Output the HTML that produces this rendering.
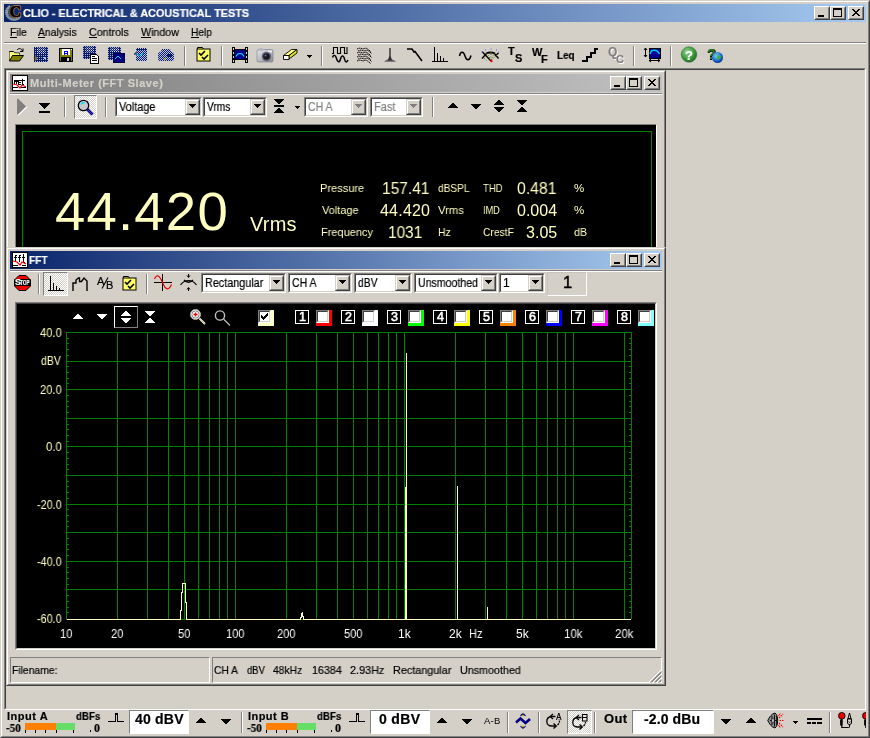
<!DOCTYPE html>
<html><head><meta charset="utf-8"><title>CLIO</title>
<style>
html,body{margin:0;padding:0;}
body{width:870px;height:738px;overflow:hidden;background:#d4d0c8;position:relative;
 font-family:"Liberation Sans",sans-serif;font-size:11px;color:#000;}
.a{position:absolute;}
.t{position:absolute;white-space:nowrap;line-height:1;will-change:transform;-webkit-text-stroke:0.2px;}
.face{background:#d4d0c8;}
.tb-act{background:linear-gradient(to right,#0a246a,#a6caf0);}
.tb-in{background:linear-gradient(to right,#808080,#c0c0c0);}
.btn{position:absolute;background:#d4d0c8;box-sizing:border-box;
 border:1px solid;border-color:#fff #404040 #404040 #fff;}
.btn:after{content:"";position:absolute;left:0;top:0;right:0;bottom:0;
 border:1px solid;border-color:#d4d0c8 #808080 #808080 #d4d0c8;}
.sunk{position:absolute;box-sizing:border-box;border:1px solid;border-color:#808080 #fff #fff #808080;}
.pressed{position:absolute;box-sizing:border-box;border:1px solid;border-color:#808080 #fff #fff #808080;
 background-color:#eae8e4;background-image:conic-gradient(#fff 25%,#d4d0c8 0 50%,#fff 0 75%,#d4d0c8 0);background-size:2px 2px;}
.sepv{position:absolute;width:1px;background:#808080;box-shadow:1px 0 0 #fff;}
.seph{position:absolute;height:1px;background:#808080;box-shadow:0 1px 0 #fff;}
.combo{position:absolute;box-sizing:border-box;background:#fff;border:1px solid;border-color:#808080 #fff #fff #808080;}
.combo:before{content:"";position:absolute;left:0;top:0;right:0;bottom:0;border:1px solid;border-color:#404040 #d4d0c8 #d4d0c8 #404040;}
.combo .cb{position:absolute;right:1px;top:1px;bottom:1px;width:15px;background:#d4d0c8;box-sizing:border-box;
 border:1px solid;border-color:#d4d0c8 #404040 #404040 #d4d0c8;color:#000;}
.combo .cb:before{content:"";position:absolute;left:0;top:0;right:0;bottom:0;border:1px solid;border-color:#fff #808080 #808080 #fff;}
.combo .cb:after{content:"";position:absolute;left:3px;top:4px;width:1px;height:1px;background:currentColor;box-shadow:1px 0px 0 0 currentColor,2px 0px 0 0 currentColor,3px 0px 0 0 currentColor,4px 0px 0 0 currentColor,5px 0px 0 0 currentColor,6px 0px 0 0 currentColor,1px 1px 0 0 currentColor,2px 1px 0 0 currentColor,3px 1px 0 0 currentColor,4px 1px 0 0 currentColor,5px 1px 0 0 currentColor,2px 2px 0 0 currentColor,3px 2px 0 0 currentColor,4px 2px 0 0 currentColor,3px 3px 0 0 currentColor;}
.combo.dis .cb{color:#808080;}
.dis{color:#808080;text-shadow:1px 1px 0 #fff;}
.disw{color:#808080;}
svg{position:absolute;overflow:visible;}
</style></head>
<body>
<!-- main frame -->
<div class="a" style="left:0;top:0;width:870px;height:738px;box-sizing:border-box;border:1px solid;border-color:#d4d0c8 #404040 #404040 #d4d0c8;"></div>
<div class="a" style="left:1px;top:1px;width:868px;height:736px;box-sizing:border-box;border:1px solid;border-color:#fff #808080 #808080 #fff;"></div>
<div class="a tb-act" style="left:4px;top:4px;width:862px;height:18px;"></div>
<svg style="left:5px;top:5px;" width="17" height="16" viewBox="0 0 17 16"><path d="M4.500 0.500C1.500 2 0 5 0.500 8.500c0.500 4 4 7 8.500 7 3.500 0 6-1.500 7-4l-3 0.500c-1 1-2.500 1.500-4 1.500-3.500 0-6-2.500-6-6 0-2.500 0.800-4.500 2.500-6z" fill="#8e96a6" stroke="#b0b4b8" stroke-width="0.600" stroke-dasharray="1.200 0.800"/><path d="M2 4l4 8M1 8l6 5M4 13l9 0M2 11l9 3" stroke="#5a6a90" stroke-width="0.500" fill="none"/><text x="4.600" y="12.300" font-family="Liberation Serif,serif" font-weight="bold" font-size="16" fill="#b8843a" stroke="#b8843a" stroke-width="2">C</text><text x="4.600" y="12.300" font-family="Liberation Serif,serif" font-weight="bold" font-size="16" fill="#000" stroke="#000" stroke-width="0.700">C</text></svg>
<div class="t" style="left:23.00px;top:7.69px;font-size:11px;font-weight:bold;color:#fff;transform:scaleX(0.9844);transform-origin:0 0;">CLIO - ELECTRICAL &amp; ACOUSTICAL TESTS</div>
<div class="btn" style="left:814px;top:6px;width:16px;height:14px;"><div class="a" style="left:3px;top:8px;width:6px;height:2px;background:#000;"></div></div>
<div class="btn" style="left:830px;top:6px;width:16px;height:14px;"><div class="a" style="left:2px;top:1px;width:9px;height:9px;box-sizing:border-box;border:1px solid #000;border-top-width:2px;"></div></div>
<div class="btn" style="left:848px;top:6px;width:16px;height:14px;"><svg style="left:3px;top:2px;" width="8" height="7" viewBox="0 0 8 7" shape-rendering="crispEdges"><path d="M0 0h2v1h1v1h2v-1h1v-1h2v1h-1v1h-1v1h-1v1h1v1h1v1h1v1h-2v-1h-1v-1h-2v1h-1v1h-2v-1h1v-1h1v-1h1v-1h-1v-1h-1v-1h-1z" fill="#000"/></svg></div>
<div class="t" style="left:10.10px;top:26.69px;font-size:11px;transform:scaleX(0.9534);transform-origin:0 0;">File</div><div class="a" style="left:10.0px;top:37px;width:7px;height:1px;background:#000;"></div>
<div class="t" style="left:38.10px;top:26.69px;font-size:11px;transform:scaleX(0.9424);transform-origin:0 0;">Analysis</div><div class="a" style="left:38.0px;top:37px;width:7px;height:1px;background:#000;"></div>
<div class="t" style="left:89.10px;top:26.69px;font-size:11px;transform:scaleX(0.9692);transform-origin:0 0;">Controls</div><div class="a" style="left:89.0px;top:37px;width:8px;height:1px;background:#000;"></div>
<div class="t" style="left:141.00px;top:26.69px;font-size:11px;transform:scaleX(0.9687);transform-origin:0 0;">Window</div><div class="a" style="left:141.0px;top:37px;width:10px;height:1px;background:#000;"></div>
<div class="t" style="left:190.80px;top:26.69px;font-size:11px;transform:scaleX(0.9238);transform-origin:0 0;">Help</div><div class="a" style="left:191.0px;top:37px;width:8px;height:1px;background:#000;"></div>
<div class="seph" style="left:4px;top:42px;width:862px;"></div>
<!-- top toolbar -->
<svg width="0" height="0" style="left:0;top:0;"><defs><pattern id="dith" width="2" height="2" patternUnits="userSpaceOnUse"><rect width="2" height="2" fill="#0a1a6a"/><rect width="1" height="1" fill="#a8b0d0"/></pattern><pattern id="dith3" width="2" height="2" patternUnits="userSpaceOnUse"><rect width="2" height="2" fill="#0a1a6a"/><rect width="1" height="1" fill="#b8c0e0"/><rect x="1" y="1" width="1" height="1" fill="#b8c0e0"/></pattern><pattern id="dith2" width="2" height="2" patternUnits="userSpaceOnUse"><rect width="2" height="2" fill="#0a1a6a"/><rect width="1" height="1" fill="#d8dcf0"/><rect x="1" y="1" width="1" height="1" fill="#8088b0"/></pattern><radialGradient id="gball" cx="0.4" cy="0.35" r="0.7"><stop offset="0" stop-color="#9fd89f"/><stop offset="0.6" stop-color="#3c9a3c"/><stop offset="1" stop-color="#1e6a1e"/></radialGradient><radialGradient id="globe" cx="0.4" cy="0.35" r="0.7"><stop offset="0" stop-color="#7fd0ff"/><stop offset="0.7" stop-color="#1060c0"/><stop offset="1" stop-color="#003080"/></radialGradient><linearGradient id="cam" x1="0" y1="0" x2="1" y2="1"><stop offset="0" stop-color="#e8e8ee"/><stop offset="1" stop-color="#8a8a96"/></linearGradient></defs></svg>
<svg style="left:8px;top:47px;" width="16" height="16" viewBox="0 0 16 16"><path d="M1.500 13V4.500h4l1 1.500h5v2" fill="#ffff80" stroke="#000" stroke-width="1"/><path d="M1.500 5h4l1 1.500h5V8h-7l-3 5z" fill="#ffff80"/><path d="M4.500 8.500h11l-4 5.500H1.500z" fill="#808000" stroke="#000" stroke-width="1"/><path d="M9 3c1.500-2 4.500-2 5.500 1M15 1.500v3h-3" fill="none" stroke="#000" stroke-width="1"/></svg>
<svg style="left:33px;top:47px;" width="16" height="16" viewBox="0 0 16 16" shape-rendering="crispEdges"><rect x="1" y="0" width="14" height="15" fill="url(#dith)"/><rect x="4" y="1" width="8" height="6" fill="url(#dith2)"/><path d="M2 8v6M3 10v3" stroke="#707020"/><path d="M10 10l2 1.500l-2 1.500" stroke="#c0c8e8" fill="none"/></svg>
<svg style="left:58px;top:47px;" width="16" height="16" viewBox="0 0 16 16" shape-rendering="crispEdges"><rect x="1.500" y="1.500" width="13" height="13" fill="#808000" stroke="#000"/><rect x="4" y="2" width="8" height="6" fill="#fff"/><path d="M6.500 8v-4h3v4M6.500 6.500h3" stroke="#0000ff" fill="none" stroke-width="1"/><rect x="3" y="10" width="10" height="5" fill="#000"/><rect x="9" y="11" width="2" height="3" fill="#d0d0d0"/><rect x="13" y="2" width="1" height="1" fill="#fff"/></svg>
<svg style="left:83px;top:46px;" width="17" height="18" viewBox="0 0 17 18" shape-rendering="crispEdges"><rect x="0" y="0" width="13" height="13" fill="url(#dith)"/><rect x="3" y="1" width="8" height="5" fill="url(#dith2)"/><path d="M7 8h6l2 2v7H7z" fill="#fff" stroke="#000"/><path d="M9 12h5M9 14h5M9 10h3" stroke="#000" fill="none"/></svg>
<svg style="left:108px;top:47px;" width="16" height="16" viewBox="0 0 16 16" shape-rendering="crispEdges"><rect x="0" y="0" width="13" height="13" fill="url(#dith)"/><rect x="3" y="1" width="8" height="4" fill="url(#dith2)"/><rect x="5" y="6" width="11" height="9" fill="#000080" stroke="#000040"/><path d="M7 12l3-3l3 3" stroke="#00e0e0" fill="none" stroke-width="1.2"/></svg>
<svg style="left:133px;top:47px;" width="16" height="16" viewBox="0 0 16 16" shape-rendering="crispEdges"><path d="M3 2h11v12H3z" fill="url(#dith3)"/><path d="M0 7l4-3v5z" fill="#4a5a9a"/><path d="M4 1v2M6 1v2M8 1v2M10 1v2M12 1v2" stroke="#0a1a6a"/><path d="M4 7l3 2 4-3" stroke="#00a0c0" fill="none"/></svg>
<svg style="left:158px;top:48px;" width="16" height="16" viewBox="0 0 16 16"><path d="M4 1h8l2 4h-12z" fill="url(#dith3)"/><path d="M0 6c0-1 1-2 2-2h12c1 0 2 1 2 2v5c0 1-1 2-2 2H2c-1 0-2-1-2-2z" fill="url(#dith3)"/><path d="M9 6h5v3H9z" fill="#0a1a6a"/><path d="M6 11h2" stroke="#e0e000"/></svg>
<div class="sepv" style="left:184px;top:46px;height:20px;"></div>
<svg style="left:196px;top:46px;" width="16" height="16" viewBox="0 0 16 16"><path d="M1.500 3.500v-2h5l1 2" fill="#ffff66" stroke="#000"/><rect x="1" y="3" width="13" height="12" fill="#ffff66" stroke="#000"/><path d="M3 7l2 2 4-4" stroke="#000" fill="none" stroke-width="1.600"/><path d="M6 11l2 2 4-4" stroke="#000" fill="none" stroke-width="1.600"/></svg>
<div class="sepv" style="left:221px;top:46px;height:20px;"></div>
<svg style="left:232px;top:47px;" width="16" height="16" viewBox="0 0 16 16" shape-rendering="crispEdges"><rect x="0" y="0" width="16" height="16" fill="#000"/><rect x="3" y="3" width="10" height="9" fill="#000090"/><path d="M4 9.500c1.500-4 6.500-4 8 0" stroke="#00d0ff" fill="none" stroke-width="1.100" shape-rendering="auto"/><path d="M1 1h1v2H1zM1 5h1v2H1zM1 9h1v2H1zM1 13h1v2H1zM14 1h1v2h-1zM14 5h1v2h-1zM14 9h1v2h-1zM14 13h1v2h-1z" fill="#d4d0c8"/><rect x="3" y="13" width="10" height="3" fill="#d4d0c8"/><rect x="3" y="0" width="10" height="2" fill="#d4d0c8"/></svg>
<svg style="left:257px;top:48px;" width="16" height="16" viewBox="0 0 16 16"><rect x="0" y="1.500" width="16" height="12.500" rx="1.500" fill="url(#cam)" stroke="#7a7a88" stroke-width="0.600"/><rect x="1" y="0" width="5" height="3" rx="1" fill="#b8b8c4"/><rect x="11" y="2.500" width="4" height="2" fill="#e8e8f0"/><circle cx="9.500" cy="8.500" r="4.800" fill="#686878"/><circle cx="9.500" cy="8.500" r="3.300" fill="#181824"/><circle cx="8.500" cy="7.500" r="1" fill="#7070a0"/></svg>
<svg style="left:283px;top:49px;" width="15" height="11" viewBox="0 0 15 11"><path d="M0.500 6.500l8-6h5.500l-8 6z" fill="#ffff80" stroke="#000" stroke-width="0.900"/><path d="M6 6.500l8-6v3.500l-8 6z" fill="#e0e030" stroke="#000" stroke-width="0.900"/><path d="M0.500 6.500h5.500v4H0.500z" fill="#fff" stroke="#000" stroke-width="0.900"/></svg>
<svg style="left:307px;top:55px;" width="5" height="3" viewBox="0 0 5 3" shape-rendering="crispEdges"><path d="M0 0h5v1h-1v1h-1v1h-1v-1h-1v-1h-1z" fill="#000"/></svg>
<div class="sepv" style="left:321px;top:46px;height:20px;"></div>
<svg style="left:332px;top:47px;" width="16" height="16" viewBox="0 0 16 16"><path d="M0 6.500h1.500v-6h4v6h3v-6h4v6h2.500v-6.500" fill="none" stroke="#000" stroke-width="1.100"/><path d="M0.500 10.500c1-3 3-3 4 1s3 4.500 4 0.500s3-4 4 0s2.500 3.500 3.500 1" fill="none" stroke="#000" stroke-width="1.500"/></svg>
<svg style="left:357px;top:47px;" width="16" height="16" viewBox="0 0 16 16"><path d="M0 2l3-1 3 1 3-1 3 2 2 2" fill="none" stroke="#000" stroke-width="1" stroke-dasharray="1.500 0.700"/><path d="M1 4l3-1 3 1 3-1 3 2 2 2" fill="none" stroke="#000" stroke-width="1" stroke-dasharray="1.500 0.700"/><path d="M0 6l3-1 3 1 3-1 3 2 2 2" fill="none" stroke="#000" stroke-width="1" stroke-dasharray="1.500 0.700"/><path d="M1 8l3-1 3 1 3-1 3 2 2 2" fill="none" stroke="#000" stroke-width="1" stroke-dasharray="1.500 0.700"/><path d="M0 10l3-1 3 1 3-1 3 2 2 2" fill="none" stroke="#000" stroke-width="1" stroke-dasharray="1.500 0.700"/><path d="M1 12l3-1 3 1 3-1 3 2 2 2" fill="none" stroke="#000" stroke-width="1" stroke-dasharray="1.500 0.700"/><path d="M0 14l3-1 3 1 3-1 3 2 2 2" fill="none" stroke="#000" stroke-width="1" stroke-dasharray="1.500 0.700"/></svg>
<svg style="left:383px;top:48px;" width="14" height="14" viewBox="0 0 14 14"><path d="M0 13.500c5-0.500 6.300-3 6.300-7V0h1.400v6.500c0 4 1.300 6.500 6.300 7z" fill="#303030"/><path d="M2 13h10" stroke="#707070" stroke-width="1"/></svg>
<svg style="left:407px;top:48px;" width="16" height="16" viewBox="0 0 16 16"><path d="M0 1h5l2 3 1-0.500 7 9.500" fill="none" stroke="#000" stroke-width="1.500"/></svg>
<svg style="left:432px;top:47px;" width="16" height="16" viewBox="0 0 16 16" shape-rendering="crispEdges"><path d="M2.500 0v14M0 14.500h16M5.500 6v8M8.500 9v5M11.500 11v3" fill="none" stroke="#000" stroke-width="1"/></svg>
<svg style="left:459px;top:51px;" width="13" height="10" viewBox="0 0 13 10"><path d="M0.500 5c1-5 4-5 5.500 0s4.500 5 6-0.500" fill="none" stroke="#000" stroke-width="1.500"/></svg>
<svg style="left:481px;top:48px;" width="18" height="15" viewBox="0 0 18 15"><path d="M5 5.500Q9.500 3.500 14 5.500" fill="none" stroke="#000" stroke-width="1.800"/><path d="M1 3.500L10 13M1 10.500L5.500 5.500M13 5l4.500 5.500M17.500 5l-3.500 3" fill="none" stroke="#000" stroke-width="1.400"/><path d="M10 12.500L17 6M10 12V3M10 12L5.500 4.500M10 12l3.500-7M3 10l2.500 2.500" stroke="#707020" stroke-width="0.900" stroke-dasharray="1.200 1.200" fill="none"/><circle cx="10.500" cy="13" r="1.200" fill="#f00"/><path d="M4 2h1M9.500 1h1M15 2h1M1 4h1M17 4h1" stroke="#6060ff" stroke-width="1.200"/></svg>
<div class="t" style="left:508.00px;top:45.69px;font-size:11px;font-weight:bold;">T</div><div class="t" style="left:514.50px;top:53.19px;font-size:11px;font-weight:bold;">S</div>
<div class="t" style="left:531.50px;top:46.69px;font-size:11px;font-weight:bold;">W</div><div class="t" style="left:540.50px;top:53.69px;font-size:11px;font-weight:bold;">F</div>
<div class="t" style="left:556.50px;top:49.71px;font-size:10.5px;font-weight:bold;transform:scaleX(0.9374);transform-origin:0 0;">Leq</div>
<svg style="left:582px;top:48px;" width="16" height="16" viewBox="0 0 16 16" shape-rendering="crispEdges"><path d="M0 12.500h5v-4h4v-4h4v-3.500h3" fill="none" stroke="#000" stroke-width="2"/></svg>
<div class="dis"><div class="t" style="left:608.00px;top:45.84px;font-size:12px;font-weight:bold;">Q</div><div class="t" style="left:615.50px;top:53.69px;font-size:11px;font-weight:bold;">C</div></div>
<div class="sepv" style="left:633px;top:46px;height:20px;"></div>
<svg style="left:644px;top:47px;" width="16" height="16" viewBox="0 0 16 16" shape-rendering="crispEdges"><rect x="5" y="1" width="11" height="10" fill="#000090" stroke="#000"/><path d="M6 7c1-5 7-5 9.500 0" stroke="#00d0ff" fill="none" stroke-width="1.400" shape-rendering="auto"/><path d="M1.500 1v9M0 3l1.500-2 1.500 2M0 8l1.500 2 1.500-2M5 13.500h11M7 12l-2 1.500 2 1.500M14 12l2 1.500-2 1.500" stroke="#000" fill="none" shape-rendering="auto"/></svg>
<div class="sepv" style="left:670px;top:46px;height:20px;"></div>
<svg style="left:681px;top:47px;" width="16" height="16" viewBox="0 0 16 16"><circle cx="8" cy="7.500" r="7.800" fill="url(#gball)" stroke="#2a6a2a" stroke-width="0.500"/></svg>
<div class="t" style="left:685.30px;top:49.00px;font-size:13px;font-weight:bold;color:#fff;">?</div>
<div class="t" style="left:706.50px;top:47.15px;font-size:14px;font-weight:bold;color:#2a7a2a;text-shadow:1px 0 0 #000,0 1px 0 #000;">?</div>
<svg style="left:712px;top:52px;" width="11" height="11" viewBox="0 0 11 11"><circle cx="5.500" cy="5.500" r="5.500" fill="url(#globe)"/><path d="M3 3c2-1 3 0 2 2s1 3 3 2l1-3" fill="#40b040" stroke="none"/></svg>
<!-- mdi client -->
<div class="a" style="left:4px;top:68px;width:862px;height:642px;box-sizing:border-box;border:1px solid;border-color:#808080 #fff #fff #808080;"></div>
<div class="a" style="left:5px;top:69px;width:860px;height:640px;box-sizing:border-box;border:1px solid;border-color:#404040 #d4d0c8 #d4d0c8 #404040;"></div>
<!-- multimeter -->
<div class="a face" style="left:6px;top:70px;width:660px;height:185px;overflow:hidden;"><div class="a" style="left:0;top:0;width:660px;height:185px;box-sizing:border-box;border:1px solid;border-color:#d4d0c8 #404040 #404040 #d4d0c8;"></div><div class="a" style="left:1px;top:1px;width:658px;height:183px;box-sizing:border-box;border:1px solid;border-color:#fff #808080 #808080 #fff;"></div><div class="a tb-in" style="left:4px;top:4px;width:652px;height:18px;"></div>
<svg style="left:6px;top:5px;" width="16" height="16" viewBox="0 0 16 16" shape-rendering="crispEdges"><rect width="16" height="16" fill="#000"/><rect x="1" y="1" width="14" height="14" fill="#fff"/><path d="M2 5h3v1h-3zM2 5v4M4 5v4M6 5h3v1M6 5v4h3M7 7h2M10 4v5h2M10 5h3" stroke="#000" fill="none"/><path d="M1 9l4 1 3 3 2-3 4 2" stroke="#f00" fill="none" stroke-width="1.200" shape-rendering="auto"/><path d="M1 12h5M9 12h5" stroke="#000"/></svg><div class="t" style="left:23.70px;top:7.69px;font-size:11px;font-weight:bold;color:#d4d0c8;letter-spacing:0.536px;">Multi-Meter (FFT Slave)</div><div class="btn" style="left:604px;top:6px;width:16px;height:14px;"><div class="a" style="left:3px;top:8px;width:6px;height:2px;background:#000;"></div></div>
<div class="btn" style="left:620px;top:6px;width:16px;height:14px;"><div class="a" style="left:2px;top:1px;width:9px;height:9px;box-sizing:border-box;border:1px solid #000;border-top-width:2px;"></div></div>
<div class="btn" style="left:638px;top:6px;width:16px;height:14px;"><svg style="left:3px;top:2px;" width="8" height="7" viewBox="0 0 8 7" shape-rendering="crispEdges"><path d="M0 0h2v1h1v1h2v-1h1v-1h2v1h-1v1h-1v1h-1v1h1v1h1v1h1v1h-2v-1h-1v-1h-2v1h-1v1h-2v-1h1v-1h1v-1h1v-1h-1v-1h-1v-1h-1z" fill="#000"/></svg></div>
<div class="a" style="left:4px;top:23px;width:652px;height:1px;background:#808080;box-shadow:0 1px 0 #fff;"></div><svg style="left:11px;top:28px;" width="11" height="18" viewBox="0 0 11 18"><path d="M0 1l1-0.500 8 8-8 8-1-0.500z" fill="#808080"/><path d="M9.800 8.800l-8.300 8.300" stroke="#fff" stroke-width="1.200"/></svg><svg style="left:33px;top:33px;" width="11" height="10" viewBox="0 0 11 10" shape-rendering="crispEdges"><path d="M0 0h11v1h-1v1h-1v1h-1v1h-1v1h-1v1h-1v-1h-1v-1h-1v-1h-1v-1h-1v-1h-1zM0 8h11v2h-11z" fill="#000"/></svg><div class="a" style="left:58px;top:27px;width:1px;height:20px;background:#808080;box-shadow:1px 0 0 #fff;"></div><div class="pressed" style="left:68px;top:25px;width:23px;height:24px;"></div><svg style="left:71px;top:29px;" width="17" height="17" viewBox="0 0 17 17"><circle cx="6.500" cy="6.500" r="5.200" fill="#c8c8d0" stroke="#000" stroke-width="1.300"/><path d="M4 5.500c0.500-1.500 2-2 3.500-2" stroke="#00e0ff" fill="none" stroke-width="1.300"/><path d="M10.500 10.500l5 5" stroke="#000080" stroke-width="3"/><path d="M10.500 10.500l5 5" stroke="#4040c0" stroke-width="1"/></svg><div class="a" style="left:99px;top:27px;width:1px;height:20px;background:#808080;box-shadow:1px 0 0 #fff;"></div><div class="combo" style="left:109px;top:27px;width:87px;height:20px;"><div class="cb"></div></div><div class="t" style="left:113.30px;top:30.84px;font-size:12px;transform:scaleX(0.9116);transform-origin:0 0;">Voltage</div>
<div class="combo" style="left:197px;top:27px;width:64px;height:20px;"><div class="cb"></div></div><div class="t" style="left:201.30px;top:30.84px;font-size:12px;transform:scaleX(0.8457);transform-origin:0 0;">Vrms</div>
<svg style="left:268px;top:29px;" width="10" height="14" viewBox="0 0 10 14" shape-rendering="crispEdges"><path d="M0 0h10v1h-10zM1 1h8v1h-8zM2 2h6v1h-6zM3 3h4v1h-4zM4 4h2v1h-2zM0 6h10v1h-10zM0 7h10v1h-10zM4 9h2v1h-2zM3 10h4v1h-4zM2 11h6v1h-6zM1 12h8v1h-8zM0 13h10v1h-10z" fill="#000"/></svg><svg style="left:289px;top:36px;" width="5" height="3" viewBox="0 0 5 3" shape-rendering="crispEdges"><path d="M0 0h5v1h-1v1h-1v1h-1v-1h-1v-1h-1z" fill="#000"/></svg><div class="combo dis" style="left:298px;top:27px;width:64px;height:20px;"><div class="cb"></div></div><div class="disw"><div class="t" style="left:302.30px;top:30.84px;font-size:12px;transform:scaleX(0.8747);transform-origin:0 0;">CH A</div></div>
<div class="combo dis" style="left:364px;top:27px;width:53px;height:20px;"><div class="cb"></div></div><div class="disw"><div class="t" style="left:368.30px;top:30.84px;font-size:12px;transform:scaleX(0.9212);transform-origin:0 0;">Fast</div></div>
<div class="a" style="left:426px;top:27px;width:1px;height:20px;background:#808080;box-shadow:1px 0 0 #fff;"></div><svg style="left:442px;top:33px;" width="10" height="5" viewBox="0 0 10 5" shape-rendering="crispEdges"><path d="M4 0h2v1h-2zM3 1h4v1h-4zM2 2h6v1h-6zM1 3h8v1h-8zM0 4h10v1h-10z" fill="#000"/></svg><svg style="left:465px;top:34px;" width="10" height="5" viewBox="0 0 10 5" shape-rendering="crispEdges"><path d="M0 0h10v1h-10zM1 1h8v1h-8zM2 2h6v1h-6zM3 3h4v1h-4zM4 4h2v1h-2z" fill="#000"/></svg><svg style="left:488px;top:30px;" width="10" height="5" viewBox="0 0 10 5" shape-rendering="crispEdges"><path d="M4 0h2v1h-2zM3 1h4v1h-4zM2 2h6v1h-6zM1 3h8v1h-8zM0 4h10v1h-10z" fill="#000"/></svg><svg style="left:488px;top:37px;" width="10" height="5" viewBox="0 0 10 5" shape-rendering="crispEdges"><path d="M0 0h10v1h-10zM1 1h8v1h-8zM2 2h6v1h-6zM3 3h4v1h-4zM4 4h2v1h-2z" fill="#000"/></svg><svg style="left:511px;top:30px;" width="10" height="12" viewBox="0 0 10 12" shape-rendering="crispEdges"><path d="M0 0h10v1h-10zM1 1h8v1h-8zM2 2h6v1h-6zM3 3h4v1h-4zM4 4h2v1h-2zM4 7h2v1h-2zM3 8h4v1h-4zM2 9h6v1h-6zM1 10h8v1h-8zM0 11h10v1h-10z" fill="#000"/></svg><div class="a" style="left:9px;top:54px;width:642px;height:140px;background:#000;box-sizing:border-box;border:1px solid;border-color:#808080 #fff #fff #808080;"></div><div class="a" style="left:16px;top:61px;width:630px;height:130px;box-sizing:border-box;border:1px solid #008000;"></div><div class="t" style="left:48.90px;top:114.87px;font-size:54.5px;color:#ffffc0;-webkit-text-stroke:0;letter-spacing:1.2px;">44.420</div><div class="t" style="left:244.00px;top:144.07px;font-size:20px;color:#ffffc0;-webkit-text-stroke:0;letter-spacing:0.193px;">Vrms</div><div class="t" style="left:314.20px;top:113.37px;font-size:11.5px;color:#ffffc0;-webkit-text-stroke:0;transform:scaleX(0.9605);transform-origin:0 0;">Pressure</div><div class="t" style="left:375.70px;top:110.96px;font-size:16px;color:#ffffc0;-webkit-text-stroke:0;transform:scaleX(0.9686);transform-origin:0 0;">157.41</div><div class="t" style="left:431.50px;top:113.37px;font-size:11.5px;color:#ffffc0;-webkit-text-stroke:0;transform:scaleX(0.8798);transform-origin:0 0;">dBSPL</div><div class="t" style="left:476.80px;top:113.37px;font-size:11.5px;color:#ffffc0;-webkit-text-stroke:0;transform:scaleX(0.8335);transform-origin:0 0;">THD</div><div class="t" style="left:510.50px;top:110.96px;font-size:16px;color:#ffffc0;-webkit-text-stroke:0;transform:scaleX(0.9840);transform-origin:0 0;">0.481</div><div class="t" style="left:567.60px;top:113.37px;font-size:11.5px;color:#ffffc0;-webkit-text-stroke:0;">%</div><div class="t" style="left:315.60px;top:135.37px;font-size:11.5px;color:#ffffc0;-webkit-text-stroke:0;transform:scaleX(0.9539);transform-origin:0 0;">Voltage</div><div class="t" style="left:373.70px;top:132.96px;font-size:16px;color:#ffffc0;-webkit-text-stroke:0;letter-spacing:0.212px;">44.420</div><div class="t" style="left:431.50px;top:135.37px;font-size:11.5px;color:#ffffc0;-webkit-text-stroke:0;transform:scaleX(0.9771);transform-origin:0 0;">Vrms</div><div class="t" style="left:476.80px;top:135.37px;font-size:11.5px;color:#ffffc0;-webkit-text-stroke:0;transform:scaleX(0.7970);transform-origin:0 0;">IMD</div><div class="t" style="left:510.50px;top:132.96px;font-size:16px;color:#ffffc0;-webkit-text-stroke:0;">0.004</div><div class="t" style="left:567.60px;top:135.37px;font-size:11.5px;color:#ffffc0;-webkit-text-stroke:0;">%</div><div class="t" style="left:315.20px;top:157.37px;font-size:11.5px;color:#ffffc0;-webkit-text-stroke:0;transform:scaleX(0.9570);transform-origin:0 0;">Frequency</div><div class="t" style="left:381.70px;top:154.96px;font-size:16px;color:#ffffc0;-webkit-text-stroke:0;transform:scaleX(0.9608);transform-origin:0 0;">1031</div><div class="t" style="left:431.50px;top:157.37px;font-size:11.5px;color:#ffffc0;-webkit-text-stroke:0;transform:scaleX(0.9107);transform-origin:0 0;">Hz</div><div class="t" style="left:476.80px;top:157.37px;font-size:11.5px;color:#ffffc0;-webkit-text-stroke:0;transform:scaleX(0.8956);transform-origin:0 0;">CrestF</div><div class="t" style="left:519.70px;top:154.96px;font-size:16px;color:#ffffc0;-webkit-text-stroke:0;letter-spacing:0.020px;">3.05</div><div class="t" style="left:567.60px;top:157.37px;font-size:11.5px;color:#ffffc0;-webkit-text-stroke:0;transform:scaleX(0.9242);transform-origin:0 0;">dB</div></div>
<!-- fft -->
<div class="a face" style="left:6px;top:247px;width:660px;height:439px;overflow:hidden;"><div class="a" style="left:0;top:0;width:660px;height:439px;box-sizing:border-box;border:1px solid;border-color:#d4d0c8 #404040 #404040 #d4d0c8;"></div><div class="a" style="left:1px;top:1px;width:658px;height:437px;box-sizing:border-box;border:1px solid;border-color:#fff #808080 #808080 #fff;"></div><div class="a tb-act" style="left:4px;top:4px;width:652px;height:18px;"></div>
<svg style="left:6px;top:5px;" width="16" height="16" viewBox="0 0 16 16" shape-rendering="crispEdges"><rect width="16" height="16" fill="#000"/><rect x="1" y="1" width="14" height="14" fill="#fff"/><path d="M3 3v7M2 5h3M3 3h2M7 3v7M6 5h3M7 3h2M11 2v8h2M10 5h3" stroke="#000" fill="none"/><path d="M1 9l4 1 3 3 2-3 4 2" stroke="#f00" fill="none" stroke-width="1.200" shape-rendering="auto"/><path d="M1 13h5M10 13h4" stroke="#000"/></svg><div class="t" style="left:23.30px;top:7.69px;font-size:11px;font-weight:bold;color:#fff;transform:scaleX(0.9177);transform-origin:0 0;">FFT</div><div class="btn" style="left:604px;top:6px;width:16px;height:14px;"><div class="a" style="left:3px;top:8px;width:6px;height:2px;background:#000;"></div></div>
<div class="btn" style="left:620px;top:6px;width:16px;height:14px;"><div class="a" style="left:2px;top:1px;width:9px;height:9px;box-sizing:border-box;border:1px solid #000;border-top-width:2px;"></div></div>
<div class="btn" style="left:638px;top:6px;width:16px;height:14px;"><svg style="left:3px;top:2px;" width="8" height="7" viewBox="0 0 8 7" shape-rendering="crispEdges"><path d="M0 0h2v1h1v1h2v-1h1v-1h2v1h-1v1h-1v1h-1v1h1v1h1v1h1v1h-2v-1h-1v-1h-2v1h-1v1h-2v-1h1v-1h1v-1h1v-1h-1v-1h-1v-1h-1z" fill="#000"/></svg></div>
<div class="a" style="left:4px;top:23px;width:652px;height:1px;background:#808080;box-shadow:0 1px 0 #fff;"></div><svg style="left:8px;top:28px;" width="17" height="16" viewBox="0 0 17 16"><path d="M5 0.500h7l4.500 4.500v6l-4.500 4.500h-7l-4.500-4.500v-6z" fill="#f00000" stroke="#000" stroke-width="1"/><rect x="0.500" y="4" width="16" height="7" fill="#000"/></svg><div class="t" style="left:9.20px;top:30.98px;font-size:9px;font-weight:bold;color:#fff;">S</div><div class="t" style="left:14.30px;top:31.95px;font-size:7.5px;font-weight:bold;color:#fff;transform:scaleX(0.6282);transform-origin:0 0;">TOP</div><div class="a" style="left:32px;top:27px;width:1px;height:20px;background:#808080;box-shadow:1px 0 0 #fff;"></div><div class="pressed" style="left:37px;top:25px;width:25px;height:24px;"></div><svg style="left:42px;top:29px;" width="16" height="16" viewBox="0 0 16 16" shape-rendering="crispEdges"><path d="M2.500 0v14M0 14.500h16M5.500 7v7M8.500 10v4M11.500 12v2" fill="none" stroke="#000"/></svg><svg style="left:66px;top:29px;" width="16" height="15" viewBox="0 0 16 15"><path d="M1 15V7h3V4l2.500-2h1v3.500h2L12 2l3 3v10" fill="none" stroke="#000" stroke-width="1.400"/></svg><div class="t" style="left:90.80px;top:28.69px;font-size:11px;">A</div><div class="t" style="left:100.20px;top:32.69px;font-size:11px;">B</div><svg style="left:95px;top:30px;" width="8" height="12" viewBox="0 0 8 12"><path d="M7 0.500l-6 11" stroke="#000" stroke-width="1.100"/></svg><svg style="left:116px;top:28px;" width="16" height="16" viewBox="0 0 16 16"><path d="M1.500 3.500v-2h5l1 2" fill="#ffff66" stroke="#000"/><rect x="1" y="3" width="13" height="12" fill="#ffff66" stroke="#000"/><path d="M3 7l2 2 4-4" stroke="#000" fill="none" stroke-width="1.600"/><path d="M6 11l2 2 4-4" stroke="#000" fill="none" stroke-width="1.600"/></svg><div class="a" style="left:140px;top:27px;width:1px;height:20px;background:#808080;box-shadow:1px 0 0 #fff;"></div><svg style="left:148px;top:27px;" width="18" height="17" viewBox="0 0 18 17"><path d="M0 8.500h18M8.500 0v17" stroke="#000" stroke-width="1"/><path d="M0.500 5c2-5 5-4 8 3.500s6 8.500 9 2" fill="none" stroke="#e00000" stroke-width="1.200"/></svg><svg style="left:174px;top:27px;" width="17" height="17" viewBox="0 0 17 17"><path d="M0.500 11c4-6 12-6 16 0M4 6c3 3 6 3 9 0" fill="none" stroke="#000" stroke-width="1.200"/><path d="M8.500 0v3M7 1.500l1.500 2 1.500-2M8.500 17v-3M7 15.500l1.500-2 1.500 2" stroke="#000" fill="none" stroke-width="1"/></svg><div class="combo" style="left:195px;top:26px;width:85px;height:20px;"><div class="cb"></div></div><div class="t" style="left:199.30px;top:29.84px;font-size:12px;transform:scaleX(0.9010);transform-origin:0 0;">Rectangular</div>
<div class="combo" style="left:282px;top:26px;width:64px;height:20px;"><div class="cb"></div></div><div class="t" style="left:286.30px;top:29.84px;font-size:12px;transform:scaleX(0.8747);transform-origin:0 0;">CH A</div>
<div class="combo" style="left:348px;top:26px;width:58px;height:20px;"><div class="cb"></div></div><div class="t" style="left:352.30px;top:29.84px;font-size:12px;transform:scaleX(0.8597);transform-origin:0 0;">dBV</div>
<div class="combo" style="left:408px;top:26px;width:84px;height:20px;"><div class="cb"></div></div><div class="t" style="left:412.30px;top:29.84px;font-size:12px;transform:scaleX(0.8818);transform-origin:0 0;">Unsmoothed</div>
<div class="combo" style="left:493px;top:26px;width:46px;height:20px;"><div class="cb"></div></div><div class="t" style="left:497.30px;top:29.84px;font-size:12px;">1</div>
<div class="a" style="left:541px;top:25px;width:40px;height:24px;box-sizing:border-box;border:1px solid;border-color:#c8c4bc #fff #fff #c8c4bc;"></div><div class="t" style="left:556.50px;top:27.03px;font-size:16.5px;-webkit-text-stroke:0.45px #000;">1</div><div class="a" style="left:9px;top:55px;width:642px;height:348px;background:#000;box-sizing:border-box;border:1px solid;border-color:#808080 #fff #fff #808080;"></div><div class="a" style="left:10px;top:56px;width:640px;height:346px;box-sizing:border-box;border:1px solid;border-color:#404040 #d4d0c8 #d4d0c8 #404040;"></div><svg style="left:67px;top:67px;" width="10" height="5" viewBox="0 0 10 5" shape-rendering="crispEdges"><path d="M4 0h2v1h-2zM3 1h4v1h-4zM2 2h6v1h-6zM1 3h8v1h-8zM0 4h10v1h-10z" fill="#fff"/></svg><svg style="left:91px;top:67px;" width="10" height="5" viewBox="0 0 10 5" shape-rendering="crispEdges"><path d="M0 0h10v1h-10zM1 1h8v1h-8zM2 2h6v1h-6zM3 3h4v1h-4zM4 4h2v1h-2z" fill="#fff"/></svg><div class="a" style="left:108px;top:59px;width:24px;height:22px;box-sizing:border-box;border:1px solid;border-color:#fff #808080 #808080 #fff;"></div><svg style="left:115px;top:64px;" width="10" height="5" viewBox="0 0 10 5" shape-rendering="crispEdges"><path d="M4 0h2v1h-2zM3 1h4v1h-4zM2 2h6v1h-6zM1 3h8v1h-8zM0 4h10v1h-10z" fill="#fff"/></svg><svg style="left:115px;top:71px;" width="10" height="5" viewBox="0 0 10 5" shape-rendering="crispEdges"><path d="M0 0h10v1h-10zM1 1h8v1h-8zM2 2h6v1h-6zM3 3h4v1h-4zM4 4h2v1h-2z" fill="#fff"/></svg><svg style="left:139px;top:64px;" width="10" height="12" viewBox="0 0 10 12" shape-rendering="crispEdges"><path d="M0 0h10v1h-10zM1 1h8v1h-8zM2 2h6v1h-6zM3 3h4v1h-4zM4 4h2v1h-2zM4 7h2v1h-2zM3 8h4v1h-4zM2 9h6v1h-6zM1 10h8v1h-8zM0 11h10v1h-10z" fill="#fff"/></svg><svg style="left:183px;top:61px;" width="18" height="18" viewBox="0 0 18 18"><circle cx="6.500" cy="6.500" r="5" fill="#fff" stroke="#a8a8a8" stroke-width="1"/><circle cx="6.500" cy="6.500" r="3.600" fill="#fff" stroke="#505050" stroke-width="0.700"/><path d="M4.500 6.500h4M6.500 4.500v4" stroke="#f00" stroke-width="1.400"/><path d="M10.500 10.500l5.500 5.500" stroke="#fff" stroke-width="1.800"/><path d="M11 11l5 5" stroke="#d0b030" stroke-width="0.700"/></svg><svg style="left:208px;top:62px;" width="18" height="18" viewBox="0 0 18 18"><circle cx="6" cy="6.500" r="4.600" fill="#000" stroke="#c0c0c0" stroke-width="1.400"/><path d="M9.500 10l6.500 6.500" stroke="#c8c8c8" stroke-width="1.100"/></svg><div class="a" style="left:252px;top:63px;width:16px;height:16px;background:#ffffc0;"></div><div class="a" style="left:252px;top:63px;width:13px;height:13px;background:#fff;box-sizing:border-box;border:1px solid;border-color:#808080 #fff #fff #808080;"></div><div class="a" style="left:253px;top:64px;width:11px;height:11px;box-sizing:border-box;border:1px solid;border-color:#404040 #d4d0c8 #d4d0c8 #404040;"></div><svg style="left:255px;top:66px;" width="7" height="7" viewBox="0 0 7 7" shape-rendering="crispEdges"><path d="M0 2h1v1h1v1h1v-1h1v-1h1v-1h1v-1h1v3h-1v1h-1v1h-1v1h-1v1h-1v-1h-1v-1h-1z" fill="#000"/></svg><div class="a" style="left:289px;top:63px;width:14px;height:14px;box-sizing:border-box;border:1px solid #fff;"></div><div class="t" style="left:292.72px;top:64.02px;font-size:12.5px;color:#fff;-webkit-text-stroke:0;-webkit-text-stroke:0.55px #fff;">1</div><div class="a" style="left:310px;top:63px;width:16px;height:16px;background:#ff0000;"></div><div class="a" style="left:310px;top:63px;width:13px;height:13px;background:#fff;box-sizing:border-box;border:1px solid;border-color:#808080 #fff #fff #808080;"></div><div class="a" style="left:311px;top:64px;width:11px;height:11px;box-sizing:border-box;border:1px solid;border-color:#404040 #d4d0c8 #d4d0c8 #404040;"></div><div class="a" style="left:335px;top:63px;width:14px;height:14px;box-sizing:border-box;border:1px solid #fff;"></div><div class="t" style="left:338.72px;top:64.02px;font-size:12.5px;color:#fff;-webkit-text-stroke:0;-webkit-text-stroke:0.55px #fff;">2</div><div class="a" style="left:356px;top:63px;width:16px;height:16px;background:#ffffff;"></div><div class="a" style="left:356px;top:63px;width:13px;height:13px;background:#fff;box-sizing:border-box;border:1px solid;border-color:#808080 #fff #fff #808080;"></div><div class="a" style="left:357px;top:64px;width:11px;height:11px;box-sizing:border-box;border:1px solid;border-color:#404040 #d4d0c8 #d4d0c8 #404040;"></div><div class="a" style="left:381px;top:63px;width:14px;height:14px;box-sizing:border-box;border:1px solid #fff;"></div><div class="t" style="left:384.72px;top:64.02px;font-size:12.5px;color:#fff;-webkit-text-stroke:0;-webkit-text-stroke:0.55px #fff;">3</div><div class="a" style="left:402px;top:63px;width:16px;height:16px;background:#00ff00;"></div><div class="a" style="left:402px;top:63px;width:13px;height:13px;background:#fff;box-sizing:border-box;border:1px solid;border-color:#808080 #fff #fff #808080;"></div><div class="a" style="left:403px;top:64px;width:11px;height:11px;box-sizing:border-box;border:1px solid;border-color:#404040 #d4d0c8 #d4d0c8 #404040;"></div><div class="a" style="left:427px;top:63px;width:14px;height:14px;box-sizing:border-box;border:1px solid #fff;"></div><div class="t" style="left:430.72px;top:64.02px;font-size:12.5px;color:#fff;-webkit-text-stroke:0;-webkit-text-stroke:0.55px #fff;">4</div><div class="a" style="left:448px;top:63px;width:16px;height:16px;background:#ffff00;"></div><div class="a" style="left:448px;top:63px;width:13px;height:13px;background:#fff;box-sizing:border-box;border:1px solid;border-color:#808080 #fff #fff #808080;"></div><div class="a" style="left:449px;top:64px;width:11px;height:11px;box-sizing:border-box;border:1px solid;border-color:#404040 #d4d0c8 #d4d0c8 #404040;"></div><div class="a" style="left:473px;top:63px;width:14px;height:14px;box-sizing:border-box;border:1px solid #fff;"></div><div class="t" style="left:476.72px;top:64.02px;font-size:12.5px;color:#fff;-webkit-text-stroke:0;-webkit-text-stroke:0.55px #fff;">5</div><div class="a" style="left:494px;top:63px;width:16px;height:16px;background:#ff8000;"></div><div class="a" style="left:494px;top:63px;width:13px;height:13px;background:#fff;box-sizing:border-box;border:1px solid;border-color:#808080 #fff #fff #808080;"></div><div class="a" style="left:495px;top:64px;width:11px;height:11px;box-sizing:border-box;border:1px solid;border-color:#404040 #d4d0c8 #d4d0c8 #404040;"></div><div class="a" style="left:519px;top:63px;width:14px;height:14px;box-sizing:border-box;border:1px solid #fff;"></div><div class="t" style="left:522.72px;top:64.02px;font-size:12.5px;color:#fff;-webkit-text-stroke:0;-webkit-text-stroke:0.55px #fff;">6</div><div class="a" style="left:540px;top:63px;width:16px;height:16px;background:#0000ff;"></div><div class="a" style="left:540px;top:63px;width:13px;height:13px;background:#fff;box-sizing:border-box;border:1px solid;border-color:#808080 #fff #fff #808080;"></div><div class="a" style="left:541px;top:64px;width:11px;height:11px;box-sizing:border-box;border:1px solid;border-color:#404040 #d4d0c8 #d4d0c8 #404040;"></div><div class="a" style="left:565px;top:63px;width:14px;height:14px;box-sizing:border-box;border:1px solid #fff;"></div><div class="t" style="left:568.72px;top:64.02px;font-size:12.5px;color:#fff;-webkit-text-stroke:0;-webkit-text-stroke:0.55px #fff;">7</div><div class="a" style="left:586px;top:63px;width:16px;height:16px;background:#ff00ff;"></div><div class="a" style="left:586px;top:63px;width:13px;height:13px;background:#fff;box-sizing:border-box;border:1px solid;border-color:#808080 #fff #fff #808080;"></div><div class="a" style="left:587px;top:64px;width:11px;height:11px;box-sizing:border-box;border:1px solid;border-color:#404040 #d4d0c8 #d4d0c8 #404040;"></div><div class="a" style="left:611px;top:63px;width:14px;height:14px;box-sizing:border-box;border:1px solid #fff;"></div><div class="t" style="left:614.72px;top:64.02px;font-size:12.5px;color:#fff;-webkit-text-stroke:0;-webkit-text-stroke:0.55px #fff;">8</div><div class="a" style="left:632px;top:63px;width:16px;height:16px;background:#80ffff;"></div><div class="a" style="left:632px;top:63px;width:13px;height:13px;background:#fff;box-sizing:border-box;border:1px solid;border-color:#808080 #fff #fff #808080;"></div><div class="a" style="left:633px;top:64px;width:11px;height:11px;box-sizing:border-box;border:1px solid;border-color:#404040 #d4d0c8 #d4d0c8 #404040;"></div>
<svg style="left:0;top:0;" width="660" height="439" viewBox="6 247 660 439" shape-rendering="crispEdges"><path d="M66 332.5H632M66 361.5H632M66 389.5H632M66 418.5H632M66 446.5H632M66 475.5H632M66 504.5H632M66 532.5H632M66 561.5H632M66 589.5H632M66 619.5H631M66.5 332V619M117.5 332V619M147.5 332V619M168.5 332V619M184.5 332V619M198.5 332V619M209.5 332V619M219.5 332V619M227.5 332V619M235.5 332V619M286.5 332V619M316.5 332V619M337.5 332V619M353.5 332V619M367.5 332V619M378.5 332V619M388.5 332V619M396.5 332V619M404.5 332V619M455.5 332V619M485.5 332V619M506.5 332V619M522.5 332V619M536.5 332V619M547.5 332V619M557.5 332V619M565.5 332V619M573.5 332V619M624.5 332V619M631.5 332V619M67 338.5h2M629 338.5h2M67 343.5h2M629 343.5h2M67 349.5h2M629 349.5h2M67 355.5h2M629 355.5h2M67 361.5h2M629 361.5h2M67 366.5h2M629 366.5h2M67 372.5h2M629 372.5h2M67 378.5h2M629 378.5h2M67 383.5h2M629 383.5h2M67 389.5h2M629 389.5h2M67 395.5h2M629 395.5h2M67 401.5h2M629 401.5h2M67 406.5h2M629 406.5h2M67 412.5h2M629 412.5h2M67 418.5h2M629 418.5h2M67 424.5h2M629 424.5h2M67 429.5h2M629 429.5h2M67 435.5h2M629 435.5h2M67 441.5h2M629 441.5h2M67 446.5h2M629 446.5h2M67 452.5h2M629 452.5h2M67 458.5h2M629 458.5h2M67 464.5h2M629 464.5h2M67 469.5h2M629 469.5h2M67 475.5h2M629 475.5h2M67 481.5h2M629 481.5h2M67 486.5h2M629 486.5h2M67 492.5h2M629 492.5h2M67 498.5h2M629 498.5h2M67 504.5h2M629 504.5h2M67 509.5h2M629 509.5h2M67 515.5h2M629 515.5h2M67 521.5h2M629 521.5h2M67 526.5h2M629 526.5h2M67 532.5h2M629 532.5h2M67 538.5h2M629 538.5h2M67 544.5h2M629 544.5h2M67 549.5h2M629 549.5h2M67 555.5h2M629 555.5h2M67 561.5h2M629 561.5h2M67 567.5h2M629 567.5h2M67 572.5h2M629 572.5h2M67 578.5h2M629 578.5h2M67 584.5h2M629 584.5h2M67 589.5h2M629 589.5h2M67 595.5h2M629 595.5h2M67 601.5h2M629 601.5h2M67 607.5h2M629 607.5h2M67 612.5h2M629 612.5h2" stroke="#008000" stroke-width="1" fill="none"/><path d="M67 619.5H180.5V610.5H181.5V592.5H182.5V583.5H185.5V602.5H186.5V619.5H300.5V617.5H301.5V613.5H302.5V611.5V616.5H303.5V619.5H405.5V486.5V619.5H406.5V352.5V619.5H457.5V485.5V619.5H487.5V606.5V619.5H631" stroke="#ffffc0" stroke-width="1" fill="none" stroke-linejoin="miter"/></svg><div class="t" style="left:34.30px;top:79.84px;font-size:12px;color:#ffffc0;-webkit-text-stroke:0;transform:scaleX(0.9291);transform-origin:0 0;">40.0</div><div class="t" style="left:34.30px;top:136.84px;font-size:12px;color:#ffffc0;-webkit-text-stroke:0;transform:scaleX(0.9291);transform-origin:0 0;">20.0</div><div class="t" style="left:40.20px;top:193.84px;font-size:12px;color:#ffffc0;-webkit-text-stroke:0;transform:scaleX(0.9471);transform-origin:0 0;">0.0</div><div class="t" style="left:31.40px;top:251.84px;font-size:12px;color:#ffffc0;-webkit-text-stroke:0;transform:scaleX(0.8994);transform-origin:0 0;">-20.0</div><div class="t" style="left:31.40px;top:308.84px;font-size:12px;color:#ffffc0;-webkit-text-stroke:0;transform:scaleX(0.8994);transform-origin:0 0;">-40.0</div><div class="t" style="left:31.40px;top:365.84px;font-size:12px;color:#ffffc0;-webkit-text-stroke:0;transform:scaleX(0.8994);transform-origin:0 0;">-60.0</div><div class="t" style="left:35.30px;top:108.34px;font-size:12px;color:#ffffc0;-webkit-text-stroke:0;transform:scaleX(0.8729);transform-origin:0 0;">dBV</div><div class="t" style="left:54.20px;top:380.84px;font-size:12px;color:#fff;-webkit-text-stroke:0;transform:scaleX(0.9290);transform-origin:0 0;">10</div><div class="t" style="left:105.07px;top:380.84px;font-size:12px;color:#fff;-webkit-text-stroke:0;transform:scaleX(0.9290);transform-origin:0 0;">20</div><div class="t" style="left:172.33px;top:380.84px;font-size:12px;color:#fff;-webkit-text-stroke:0;transform:scaleX(0.9290);transform-origin:0 0;">50</div><div class="t" style="left:220.15px;top:380.84px;font-size:12px;color:#fff;-webkit-text-stroke:0;transform:scaleX(0.9240);transform-origin:0 0;">100</div><div class="t" style="left:271.02px;top:380.84px;font-size:12px;color:#fff;-webkit-text-stroke:0;transform:scaleX(0.9240);transform-origin:0 0;">200</div><div class="t" style="left:338.28px;top:380.84px;font-size:12px;color:#fff;-webkit-text-stroke:0;transform:scaleX(0.9240);transform-origin:0 0;">500</div><div class="t" style="left:392.20px;top:380.84px;font-size:12px;color:#fff;-webkit-text-stroke:0;transform:scaleX(0.9784);transform-origin:0 0;">1k</div><div class="t" style="left:443.07px;top:380.84px;font-size:12px;color:#fff;-webkit-text-stroke:0;transform:scaleX(0.9784);transform-origin:0 0;">2k</div><div class="t" style="left:510.33px;top:380.84px;font-size:12px;color:#fff;-webkit-text-stroke:0;transform:scaleX(0.9784);transform-origin:0 0;">5k</div><div class="t" style="left:558.15px;top:380.84px;font-size:12px;color:#fff;-webkit-text-stroke:0;transform:scaleX(0.9562);transform-origin:0 0;">10k</div><div class="t" style="left:609.02px;top:380.84px;font-size:12px;color:#fff;-webkit-text-stroke:0;transform:scaleX(0.9562);transform-origin:0 0;">20k</div><div class="t" style="left:463.20px;top:380.84px;font-size:12px;color:#fff;-webkit-text-stroke:0;transform:scaleX(0.9205);transform-origin:0 0;">Hz</div>
<div class="a" style="left:4px;top:410px;width:200px;height:26px;box-sizing:border-box;border:1px solid;border-color:#808080 #fff #fff #808080;"></div><div class="a" style="left:206px;top:410px;width:450px;height:26px;box-sizing:border-box;border:1px solid;border-color:#808080 #fff #fff #808080;"></div><div class="t" style="left:6.00px;top:417.99px;font-size:11px;transform:scaleX(0.9421);transform-origin:0 0;">Filename:</div><div class="t" style="left:207.50px;top:417.99px;font-size:11px;transform:scaleX(0.9348);transform-origin:0 0;">CH A</div><div class="t" style="left:240.60px;top:417.99px;font-size:11px;transform:scaleX(0.8609);transform-origin:0 0;">dBV</div><div class="t" style="left:267.10px;top:417.99px;font-size:11px;transform:scaleX(0.9365);transform-origin:0 0;">48kHz</div><div class="t" style="left:305.50px;top:417.99px;font-size:11px;transform:scaleX(0.9742);transform-origin:0 0;">16384</div><div class="t" style="left:344.00px;top:417.99px;font-size:11px;transform:scaleX(0.9841);transform-origin:0 0;">2.93Hz</div><div class="t" style="left:387.00px;top:417.99px;font-size:11px;transform:scaleX(0.9846);transform-origin:0 0;">Rectangular</div><div class="t" style="left:453.80px;top:417.99px;font-size:11px;transform:scaleX(0.9748);transform-origin:0 0;">Unsmoothed</div><svg style="left:643px;top:423px;" width="13" height="13" viewBox="0 0 13 13"><path d="M12 0L0 12M12 4L4 12M12 8L8 12" stroke="#fff" stroke-width="1"/><path d="M12.500 1.500L1.500 12.500M12.500 2.500L2.500 12.500M12.500 5.500L5.500 12.500M12.500 6.500L6.500 12.500M12.500 9.500L9.500 12.500M12.500 10.500L10.500 12.500" stroke="#808080" stroke-width="0.900"/></svg></div>
<!-- bottom toolbar -->
<div class="t" style="left:6.70px;top:711.29px;font-size:11px;font-weight:bold;letter-spacing:0.522px;">Input A</div><div class="t" style="left:75.70px;top:711.29px;font-size:11px;font-weight:bold;transform:scaleX(0.8800);transform-origin:0 0;">dBFs</div><div class="t" style="left:6.00px;top:722.24px;font-size:12px;font-weight:bold;transform:scaleX(0.9252);transform-origin:0 0;font-family:'Liberation Serif',serif;">-50</div><div class="a" style="left:25px;top:723px;width:31px;height:7px;background:#ff8000;"></div><div class="a" style="left:56px;top:723px;width:19px;height:7px;background:#66dd66;"></div><div class="a" style="left:25px;top:730px;width:1px;height:3px;background:#000;"></div><div class="a" style="left:35px;top:730px;width:1px;height:3px;background:#000;"></div><div class="a" style="left:45px;top:730px;width:1px;height:3px;background:#000;"></div><div class="a" style="left:56px;top:730px;width:1px;height:3px;background:#000;"></div><div class="a" style="left:73px;top:730px;width:1px;height:3px;background:#000;"></div><div class="a" style="left:90px;top:730px;width:1px;height:2px;background:#000;"></div><div class="t" style="left:93.80px;top:722.24px;font-size:12px;font-weight:bold;font-family:'Liberation Serif',serif;">0</div><svg style="left:108px;top:713px;" width="16" height="10" viewBox="0 0 16 10" shape-rendering="crispEdges"><path d="M0 8.500h7.500v-8h2v8h6.500" fill="none" stroke="#000"/><rect x="7" y="0" width="3" height="2" fill="#000"/></svg>
<div class="a" style="left:129px;top:710px;width:60px;height:24px;background:#fff;box-sizing:border-box;border:1px solid;border-color:#808080 #fff #fff #808080;"></div><div class="t" style="left:134.50px;top:712.15px;font-size:14px;font-weight:bold;letter-spacing:0.207px;">40 dBV</div>
<svg style="left:196px;top:718px;" width="10" height="5" viewBox="0 0 10 5" shape-rendering="crispEdges"><path d="M4 0h2v1h-2zM3 1h4v1h-4zM2 2h6v1h-6zM1 3h8v1h-8zM0 4h10v1h-10z" fill="#000"/></svg><svg style="left:221px;top:719px;" width="10" height="5" viewBox="0 0 10 5" shape-rendering="crispEdges"><path d="M0 0h10v1h-10zM1 1h8v1h-8zM2 2h6v1h-6zM3 3h4v1h-4zM4 4h2v1h-2z" fill="#000"/></svg><div class="sepv" style="left:241px;top:712px;height:21px;"></div>
<div class="t" style="left:247.70px;top:711.29px;font-size:11px;font-weight:bold;letter-spacing:0.454px;">Input B</div><div class="t" style="left:316.70px;top:711.29px;font-size:11px;font-weight:bold;transform:scaleX(0.8800);transform-origin:0 0;">dBFs</div><div class="t" style="left:247.00px;top:722.24px;font-size:12px;font-weight:bold;transform:scaleX(0.9252);transform-origin:0 0;font-family:'Liberation Serif',serif;">-50</div><div class="a" style="left:266px;top:723px;width:31px;height:7px;background:#ff8000;"></div><div class="a" style="left:297px;top:723px;width:19px;height:7px;background:#66dd66;"></div><div class="a" style="left:266px;top:730px;width:1px;height:3px;background:#000;"></div><div class="a" style="left:276px;top:730px;width:1px;height:3px;background:#000;"></div><div class="a" style="left:286px;top:730px;width:1px;height:3px;background:#000;"></div><div class="a" style="left:297px;top:730px;width:1px;height:3px;background:#000;"></div><div class="a" style="left:314px;top:730px;width:1px;height:3px;background:#000;"></div><div class="a" style="left:331px;top:730px;width:1px;height:2px;background:#000;"></div><div class="t" style="left:334.80px;top:722.24px;font-size:12px;font-weight:bold;font-family:'Liberation Serif',serif;">0</div><svg style="left:349px;top:713px;" width="16" height="10" viewBox="0 0 16 10" shape-rendering="crispEdges"><path d="M0 8.500h7.500v-8h2v8h6.500" fill="none" stroke="#000"/><rect x="7" y="0" width="3" height="2" fill="#000"/></svg>
<div class="a" style="left:370px;top:710px;width:60px;height:24px;background:#fff;box-sizing:border-box;border:1px solid;border-color:#808080 #fff #fff #808080;"></div><div class="t" style="left:379.30px;top:712.15px;font-size:14px;font-weight:bold;letter-spacing:0.331px;">0 dBV</div>
<svg style="left:437px;top:718px;" width="10" height="5" viewBox="0 0 10 5" shape-rendering="crispEdges"><path d="M4 0h2v1h-2zM3 1h4v1h-4zM2 2h6v1h-6zM1 3h8v1h-8zM0 4h10v1h-10z" fill="#000"/></svg><svg style="left:462px;top:719px;" width="10" height="5" viewBox="0 0 10 5" shape-rendering="crispEdges"><path d="M0 0h10v1h-10zM1 1h8v1h-8zM2 2h6v1h-6zM3 3h4v1h-4zM4 4h2v1h-2z" fill="#000"/></svg><div class="t" style="left:483.70px;top:715.56px;font-size:9.5px;letter-spacing:0.231px;-webkit-text-stroke:0;">A-B</div>
<div class="sepv" style="left:507px;top:712px;height:21px;"></div>
<svg style="left:515px;top:712px;" width="16" height="18" viewBox="0 0 16 18"><path d="M1 10.500l4.500-4 5 4.500 4.500-4" fill="none" stroke="#000080" stroke-width="2.600" stroke-linejoin="miter"/><path d="M5.500 4c1.500-2.500 3.500-2.500 5 0M5.500 14c1.500 2.500 3.500 2.500 5 0" fill="none" stroke="#000080" stroke-width="1.100"/><path d="M7 3.500h2M7 14.500h2" stroke="#c8b400" stroke-width="1.400"/><path d="M7.300 2h1.400M7.300 16h1.400" stroke="#000080" stroke-width="1"/></svg>
<div class="sepv" style="left:538px;top:712px;height:21px;"></div>
<svg style="left:546px;top:712px;" width="17" height="17" viewBox="0 0 17 17"><path d="M9.500 4.500H5C2 5 0.800 7.500 0.800 9.500c0 3 2.500 4.500 5 4.500h4" fill="none" stroke="#000" stroke-width="1.300"/><path d="M7 2L4.300 4.500 7 7M7.500 11.500L10.300 14 7.500 16.500" fill="none" stroke="#000" stroke-width="1.300"/><path d="M11.500 13c2-1.500 2.500-4 1.500-6" fill="none" stroke="#000" stroke-width="1.300" stroke-dasharray="2 1"/><path d="M10.500 8l2.300-7 2.300 7M11.300 5.500h3" fill="none" stroke="#000" stroke-width="1"/></svg>
<div class="pressed" style="left:567px;top:710px;width:25px;height:24px;"></div><svg style="left:572px;top:713px;" width="17" height="17" viewBox="0 0 17 17"><path d="M9.500 4.500H5C2 5 0.800 7.500 0.800 9.500c0 3 2.500 4.500 5 4.500h4" fill="none" stroke="#000" stroke-width="1.300"/><path d="M7 2L4.300 4.500 7 7M7.500 11.500L10.300 14 7.500 16.500" fill="none" stroke="#000" stroke-width="1.300"/><path d="M11.500 13c2-1.500 2.500-4 1.500-6" fill="none" stroke="#000" stroke-width="1.300" stroke-dasharray="2 1"/><path d="M10.500 1.500h4.500v6.500h-4.500zM10.500 4.500h4.500" fill="#eae8e4" stroke="#000" stroke-width="1.100"/></svg>
<div class="sepv" style="left:594px;top:712px;height:21px;"></div>
<div class="t" style="left:603.50px;top:712.00px;font-size:13px;font-weight:bold;letter-spacing:0.409px;">Out</div>
<div class="a" style="left:632px;top:710px;width:82px;height:24px;background:#fff;box-sizing:border-box;border:1px solid;border-color:#808080 #fff #fff #808080;"></div><div class="t" style="left:644.00px;top:712.15px;font-size:14px;font-weight:bold;letter-spacing:0.110px;">-2.0 dBu</div>
<svg style="left:721px;top:719px;" width="10" height="5" viewBox="0 0 10 5" shape-rendering="crispEdges"><path d="M0 0h10v1h-10zM1 1h8v1h-8zM2 2h6v1h-6zM3 3h4v1h-4zM4 4h2v1h-2z" fill="#000"/></svg><svg style="left:746px;top:718px;" width="10" height="5" viewBox="0 0 10 5" shape-rendering="crispEdges"><path d="M4 0h2v1h-2zM3 1h4v1h-4zM2 2h6v1h-6zM1 3h8v1h-8zM0 4h10v1h-10z" fill="#000"/></svg><svg style="left:767px;top:712px;" width="18" height="17" viewBox="0 0 18 17"><path d="M0.800 8.500C2 6 4 2 8 1c3.500 2 3.500 13 0 15C4 15 2 11 0.800 8.500z" fill="#909090" stroke="#000" stroke-width="1"/><path d="M3 8.500h7M5 4v9M7.500 2.500v12M9.700 4v9" stroke="#000" stroke-width="0.900" fill="none"/><ellipse cx="6" cy="8.500" rx="1.300" ry="2.500" fill="#d0d0d0" stroke="#000" stroke-width="0.600"/><path d="M12 6l4-4M12.500 8.500h4.500M12 11l4 4" stroke="#f00" stroke-width="1.200" stroke-dasharray="1.500 1"/><path d="M11.500 4l1.500-2.500M11.500 13l1.500 2.500" stroke="#f00" stroke-width="1"/></svg>
<svg style="left:793px;top:721px;" width="5" height="3" viewBox="0 0 5 3" shape-rendering="crispEdges"><path d="M0 0h5v1h-1v1h-1v1h-1v-1h-1v-1h-1z" fill="#000"/></svg><svg style="left:807px;top:718px;" width="15" height="6" viewBox="0 0 15 6" shape-rendering="crispEdges"><path d="M0 0h15v2H0zM0 4h4v2H0zM5 4h4v2H5zM10 4h5v2h-5z" fill="#000"/></svg>
<div class="sepv" style="left:829px;top:712px;height:21px;"></div>
<svg style="left:838px;top:712px;" width="17" height="18" viewBox="0 0 17 18"><circle cx="3.800" cy="3.800" r="3.300" fill="#f00000" stroke="#000" stroke-width="0.900"/><path d="M3.800 7v8.500h7" stroke="#000" stroke-width="1.200" fill="none"/><path d="M3.300 7.500v6" stroke="#000" stroke-width="2.400" fill="none"/><path d="M11.500 1l-1.500 5.500h3zM9 7h5M9.500 7v4c0 2 4 2 4 0V7M11.500 12.500v3" fill="none" stroke="#000" stroke-width="1"/><path d="M10.500 9.500l1 1 1-1" stroke="#000" stroke-width="0.800" fill="none"/></svg>
<div class="a" style="left:862px;top:711px;width:4px;height:22px;overflow:hidden;"><svg style="left:0;top:1px;" width="17" height="18" viewBox="0 0 17 18"><circle cx="3.800" cy="3.800" r="3.300" fill="#f00000" stroke="#000" stroke-width="0.900"/><path d="M3.800 7v8.500h7" stroke="#000" stroke-width="1.200" fill="none"/><path d="M3.300 7.500v6" stroke="#000" stroke-width="2.400" fill="none"/></svg></div>
</body></html>
